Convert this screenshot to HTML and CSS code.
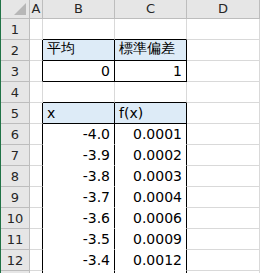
FILE: index.html
```html
<!DOCTYPE html>
<html>
<head>
<meta charset="utf-8">
<link rel="stylesheet" href="styles.css">
</head>
<body>
<div class="sheet">
  <div class="h corner"><svg class="tri" width="12" height="12" viewBox="0 0 12 12"><polygon points="12,0 12,12 0,12" fill="#b7b7b7"/></svg></div>
  <div class="h col">A</div>
  <div class="h col">B</div>
  <div class="h col">C</div>
  <div class="h col">D</div>

  <div class="h row">1</div>
  <div class="c"></div><div class="c bb"></div><div class="c bb"></div><div class="c"></div>

  <div class="h row">2</div>
  <div class="c br"></div><div class="c fill br bb l">平均</div><div class="c fill br bb l">標準偏差</div><div class="c"></div>

  <div class="h row">3</div>
  <div class="c br"></div><div class="c br bb r">0</div><div class="c br bb r">1</div><div class="c"></div>

  <div class="h row">4</div>
  <div class="c"></div><div class="c bb"></div><div class="c bb"></div><div class="c"></div>

  <div class="h row">5</div>
  <div class="c br"></div><div class="c fill br bb l">x</div><div class="c fill br bb l">f(x)</div><div class="c"></div>

  <div class="h row">6</div>
  <div class="c br"></div><div class="c br wb r">-4.0</div><div class="c br wb r">0.0001</div><div class="c"></div>

  <div class="h row">7</div>
  <div class="c br"></div><div class="c br wb r">-3.9</div><div class="c br wb r">0.0002</div><div class="c"></div>

  <div class="h row">8</div>
  <div class="c br"></div><div class="c br wb r">-3.8</div><div class="c br wb r">0.0003</div><div class="c"></div>

  <div class="h row">9</div>
  <div class="c br"></div><div class="c br wb r">-3.7</div><div class="c br wb r">0.0004</div><div class="c"></div>

  <div class="h row">10</div>
  <div class="c br"></div><div class="c br wb r">-3.6</div><div class="c br wb r">0.0006</div><div class="c"></div>

  <div class="h row">11</div>
  <div class="c br"></div><div class="c br wb r">-3.5</div><div class="c br wb r">0.0009</div><div class="c"></div>

  <div class="h row">12</div>
  <div class="c br"></div><div class="c br wb r">-3.4</div><div class="c br wb r">0.0012</div><div class="c"></div>

  <div class="h row"></div>
  <div class="c br"></div><div class="c br wb"></div><div class="c br wb"></div><div class="c"></div>
</div>
</body>
</html>
```
FILE: styles.css
```css
html, body {
  margin: 0;
  padding: 0;
  background: #ffffff;
  overflow: hidden;
}
body {
  width: 260px;
  height: 273px;
  border-left: 1px solid #217346;
  box-sizing: border-box;
}
.sheet {
  display: grid;
  grid-template-columns: 29px 13px 72px 72px 73px;
  grid-template-rows: 19px repeat(12, 21px) 2px;
  font-family: "DejaVu Sans", sans-serif;
  color: #000;
}
.sheet > div {
  box-sizing: border-box;
  display: flex;
  align-items: flex-end;
  overflow: hidden;
  white-space: nowrap;
}
.h {
  background: #e6e6e6;
  color: #262626;
  font-size: 13px;
  border-right: 1px solid #bdbdbd;
  border-bottom: 1px solid #bdbdbd;
  justify-content: center;
  padding-bottom: 2px;
}
.corner {
  position: relative;
}
.tri {
  position: absolute;
  right: 3px;
  bottom: 3px;
}
.c {
  border-right: 1px solid #d9d9d9;
  border-bottom: 1px solid #d9d9d9;
  font-size: 14px;
  padding: 0 4px 2px 4px;
}
.bb { border-bottom-color: #000; }
.br { border-right-color: #000; }
.wb { border-bottom-color: #fff; }
.fill { background: #ddebf7; }
.l { justify-content: flex-start; }
.r { justify-content: flex-end; }
```
